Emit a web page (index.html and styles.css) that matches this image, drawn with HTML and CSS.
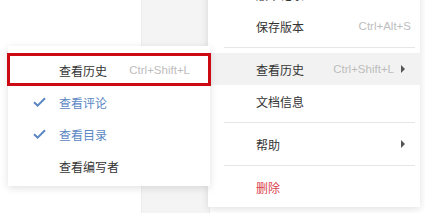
FILE: index.html
```html
<!DOCTYPE html>
<html lang="zh-CN">
<head>
    <meta charset="UTF-8">
    <title>查看历史</title>
    <link rel="stylesheet" href="styles.css">
</head>
<body>
    <div class="page">
        <div class="sidebar"></div>

        <div class="menu menu-main">
            <div class="menu-item">
                <span class="label">版本记录</span>
            </div>
            <div class="menu-item">
                <span class="label">保存版本</span>
                <span class="shortcut">Ctrl+Alt+S</span>
            </div>
            <div class="divider"></div>
            <div class="menu-item active has-sub">
                <span class="label">查看历史</span>
                <span class="shortcut">Ctrl+Shift+L</span>
                <span class="arrow"></span>
            </div>
            <div class="menu-item">
                <span class="label">文档信息</span>
            </div>
            <div class="divider"></div>
            <div class="menu-item has-sub">
                <span class="label">帮助</span>
                <span class="arrow"></span>
            </div>
            <div class="divider"></div>
            <div class="menu-item danger">
                <span class="label">删除</span>
            </div>
        </div>

        <div class="menu menu-sub">
            <div class="menu-item">
                <span class="check"></span>
                <span class="label">查看历史</span>
                <span class="shortcut">Ctrl+Shift+L</span>
            </div>
            <div class="menu-item checked">
                <span class="check">
                    <svg width="13" height="10" viewBox="0 0 13 10"><path d="M1 5.2 L4.6 8.6 L12 1.2" fill="none" stroke="#5b87c4" stroke-width="2"/></svg>
                </span>
                <span class="label">查看评论</span>
            </div>
            <div class="menu-item checked">
                <span class="check">
                    <svg width="13" height="10" viewBox="0 0 13 10"><path d="M1 5.2 L4.6 8.6 L12 1.2" fill="none" stroke="#5b87c4" stroke-width="2"/></svg>
                </span>
                <span class="label">查看目录</span>
            </div>
            <div class="menu-item">
                <span class="check"></span>
                <span class="label">查看编写者</span>
            </div>
        </div>

        <div class="highlight"></div>
    </div>
</body>
</html>
```

FILE: styles.css
```css
body {
    margin: 0;
    background-color: #ffffff;
    font-family: "Noto Sans CJK SC", "Liberation Sans", sans-serif;
    font-size: 12px;
    color: #333;
}
.page {
    position: relative;
    width: 425px;
    height: 213px;
    overflow: hidden;
}
.sidebar {
    position: absolute;
    left: 141px;
    top: 0;
    width: 67px;
    height: 213px;
    background-color: #f4f4f4;
    border-left: 1px solid #ececec;
    border-right: 1px solid #ececec;
}
.menu {
    position: absolute;
    background-color: #fff;
    box-shadow: 0 2px 8px rgba(0,0,0,0.12);
    padding: 4px 0;
}
.menu-main {
    left: 208px;
    top: -26px;
    width: 212px;
}
.menu-sub {
    left: 8px;
    top: 46px;
    width: 202px;
    padding: 8px 0 4px;
}
.menu-item {
    display: flex;
    align-items: center;
    height: 32px;
    padding: 0 9px 0 48px;
}
.menu-sub .menu-item {
    padding: 0 20px 0 25px;
}
.menu-item.active {
    background-color: #f2f2f2;
}
.label {
    flex-grow: 1;
    white-space: nowrap;
}
.shortcut {
    font-family: "Liberation Sans", sans-serif;
    font-size: 11.5px;
    color: #bdbdbd;
}
.arrow {
    width: 0;
    height: 0;
    margin-left: 7px;
    margin-right: 6px;
    border-top: 4px solid transparent;
    border-bottom: 4px solid transparent;
    border-left: 4px solid #555;
}
.has-sub .label + .arrow {
    margin-left: auto;
}
.danger .label {
    color: #d9434b;
}
.checked .label {
    color: #5b87c4;
}
.check {
    width: 26px;
    display: flex;
    align-items: center;
}
.divider {
    height: 1px;
    background-color: #e6e6e6;
    margin: 5px 5px 5px 16px;
}
.highlight {
    position: absolute;
    left: 7px;
    top: 53px;
    width: 198px;
    height: 27px;
    border: 3px solid #cc0a14;
}
```
